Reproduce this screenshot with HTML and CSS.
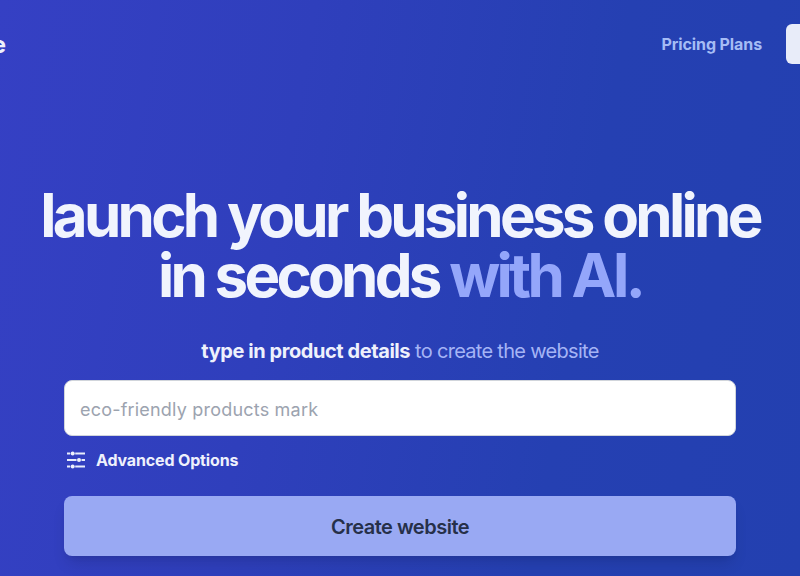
FILE: index.html
```html
<!DOCTYPE html>
<html lang="en">
<head>
<meta charset="utf-8">
<title>Launch your business online</title>
<link rel="stylesheet" href="styles.css">
</head>
<body>
<div class="page">
  <header class="nav">
    <a class="logo">Site</a>
    <div class="nav-right">
      <a class="nav-link">Pricing Plans</a>
      <a class="nav-btn">Sign in</a>
    </div>
  </header>
  <main class="hero">
    <h1 class="title">launch your business online<br>in seconds <span class="accent">with AI.</span></h1>
    <p class="sub"><strong>type in product details</strong> to create the website</p>
    <div class="form">
      <input class="field" type="text" placeholder="eco-friendly products mark">
      <div class="adv">
        <svg class="adv-icon" width="18" height="18" viewBox="0 0 18 18">
          <path class="adv-lines" d="M0 2.5H3.2M8.2 2.5H18M0 9H9.5M14.5 9H18M0 15.5H3.2M8.2 15.5H18"/>
          <circle class="adv-dot" cx="5.7" cy="2.5" r="2"/><circle class="adv-dot" cx="12" cy="9" r="2"/><circle class="adv-dot" cx="5.7" cy="15.5" r="2"/>
        </svg>
        <span>Advanced Options</span>
      </div>
      <button class="cta" type="button">Create website</button>
    </div>
  </main>
</div>
</body>
</html>
```
FILE: styles.css
```css
* { box-sizing: border-box; }
html, body { margin: 0; height: 100%; overflow: hidden; }
body { font-family: Inter, "Liberation Sans", sans-serif; }
.page {
  width: 800px;
  height: 576px;
  overflow: hidden;
  background: linear-gradient(100deg, #3540c4 0%, #2f3fbc 35%, #2540b2 70%, #2340b0 100%);
}
.nav {
  display: flex;
  justify-content: space-between;
  align-items: center;
  height: 40px;
  margin: 24px -40px 0 -40px;
}
.logo {
  font-size: 24px;
  font-weight: 700;
  color: #eef1fc;
  width: 46px;
  text-align: right;
  white-space: nowrap;
}
.nav-right { display: flex; align-items: center; gap: 24px; }
.nav-link { font-size: 16px; line-height: 38px; font-weight: 700; letter-spacing: -0.1px; color: #a5bcf5; }
.nav-btn {
  display: block;
  width: 54px;
  height: 40px;
  border-radius: 6px;
  background: #e8ecf9;
  color: transparent;
  font-size: 14px;
  overflow: hidden;
}
.hero { display: flex; flex-direction: column; align-items: center; padding-top: 121px; }
.title {
  margin: 0;
  font-size: 60px;
  line-height: 60px;
  font-weight: 700;
  letter-spacing: -3.72px;
  text-align: center;
  color: #f1f4fd;
  white-space: nowrap;
}
.accent { color: #94a6fa; }
.sub { margin: 32px 0 0; font-size: 20px; letter-spacing: -0.7px; line-height: 28px; color: #a5b4f5; }
.sub strong { font-weight: 700; letter-spacing: -0.43px; color: #eef1fc; }
.form { width: 672px; margin-top: 15px; display: flex; flex-direction: column; }
.field {
  height: 56px;
  width: 100%;
  border: 1px solid #d1d5db;
  border-radius: 8px;
  padding: 2px 15px 0;
  background: #fff;
  letter-spacing: 0.2px;
  font: 400 18px Inter, "Liberation Sans", sans-serif;
}
.field::placeholder { color: #9ca3af; opacity: 1; }
.adv {
  display: flex;
  align-items: center;
  gap: 10px;
  height: 20px;
  margin-top: 14px;
  padding-left: 3px;
  font-size: 16px;
  font-weight: 700;
  letter-spacing: -0.15px;
  color: #eef1fc;
}
.adv-icon { display: block; flex: none; width: 18px; height: 18px; margin-right: 1px; }
.adv-lines { fill: none; stroke: #e8edfb; stroke-width: 1.8; }
.adv-dot { fill: #eef1fc; }
.cta {
  margin-top: 26px;
  height: 60px;
  padding-top: 2px;
  border: 0;
  border-radius: 8px;
  background: #99a9f3;
  color: #263049;
  letter-spacing: -0.5px;
  font-family: Inter, "Liberation Sans", sans-serif;
  font-size: 20px;
  font-weight: 600;
  box-shadow: 0 10px 15px -3px rgba(0,0,0,.12), 0 4px 6px -4px rgba(0,0,0,.1);
}
```
